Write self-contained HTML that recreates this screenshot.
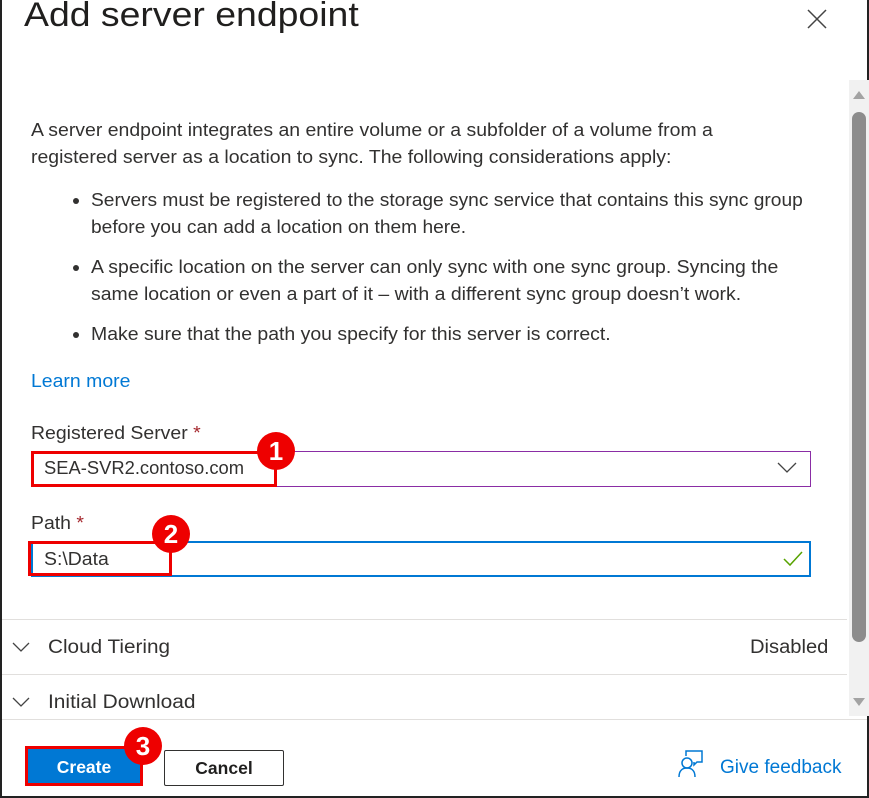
<!DOCTYPE html>
<html><head><style>
*{margin:0;padding:0;box-sizing:border-box}
body{width:869px;height:798px;overflow:hidden;background:#fff;font-family:"Liberation Sans",sans-serif;color:#323130;position:relative}
.frame{position:absolute;left:0;top:0;width:869px;height:798px;border:2px solid #222;border-top:none}
.a{position:absolute;white-space:nowrap}
.t{font-size:18px;line-height:27px;transform:scaleX(1.08);transform-origin:left}
.badge{position:absolute;width:38px;height:38px;border-radius:50%;background:#e00;color:#fff;font-size:26px;font-weight:bold;text-align:center;line-height:38px}
.red{position:absolute;border:3px solid #e00}
</style></head><body>
<div class="frame"></div>
<div class="a" style="left:24px;top:-4px;font-size:34px;color:#201f1e;transform:scaleX(1.1);transform-origin:left">Add server endpoint</div>
<svg class="a" style="left:807px;top:9px" width="20" height="20"><path d="M1 1L19 19M19 1L1 19" stroke="#444" stroke-width="1.5"/></svg>
<div class="a" style="left:849px;top:80px;width:20px;height:636px;background:#f1f1f1"></div>
<svg class="a" style="left:852px;top:90px" width="14" height="10"><path d="M7 1L13 9H1Z" fill="#a3a3a3"/></svg>
<div class="a" style="left:852px;top:112px;width:14px;height:530px;background:#8c8c8c;border-radius:7px"></div>
<svg class="a" style="left:852px;top:697px" width="14" height="10"><path d="M1 1H13L7 9Z" fill="#a3a3a3"/></svg>

<div class="a t" style="left:31px;top:117px">A server endpoint integrates an entire volume or a subfolder of a volume from a<br>registered server as a location to sync. The following considerations apply:</div>
<div class="a" style="left:73px;top:198px;width:6px;height:6px;border-radius:50%;background:#323130"></div>
<div class="a t" style="left:91px;top:187px;transform:scaleX(1.065)">Servers must be registered to the storage sync service that contains this sync group<br>before you can add a location on them here.</div>
<div class="a" style="left:73px;top:265px;width:6px;height:6px;border-radius:50%;background:#323130"></div>
<div class="a t" style="left:91px;top:254px">A specific location on the server can only sync with one sync group. Syncing the<br>same location or even a part of it – with a different sync group doesn’t work.</div>
<div class="a" style="left:73px;top:332px;width:6px;height:6px;border-radius:50%;background:#323130"></div>
<div class="a t" style="left:91px;top:321px">Make sure that the path you specify for this server is correct.</div>
<div class="a t" style="left:31px;top:368px;color:#0078d4">Learn more</div>

<div class="a t" style="left:31px;top:420px">Registered Server <span style="color:#a4262c">*</span></div>
<div class="a" style="left:31px;top:451px;width:780px;height:36px;border:1px solid #8a2da5"></div>
<div class="a t" style="left:44px;top:455px;transform:scaleX(1.02)">SEA-SVR2.contoso.com</div>
<svg class="a" style="left:777px;top:462px" width="20" height="12"><path d="M1 1L10 10L19 1" stroke="#444" stroke-width="1.3" fill="none"/></svg>
<div class="red" style="left:31px;top:451px;width:246px;height:36px"></div>
<div class="badge" style="left:257px;top:432px">1</div>

<div class="a t" style="left:31px;top:510px">Path <span style="color:#a4262c">*</span></div>
<div class="a" style="left:31px;top:541px;width:780px;height:36px;border:2px solid #0078d4"></div>
<div class="a t" style="left:44px;top:546px">S:\Data</div>
<svg class="a" style="left:783px;top:551px" width="20" height="16"><path d="M1 8L7 14L19 1" stroke="#57a300" stroke-width="1.5" fill="none"/></svg>
<div class="red" style="left:28px;top:541px;width:144px;height:35px"></div>
<div class="badge" style="left:152px;top:515px">2</div>

<div class="a" style="left:2px;top:619px;width:845px;height:1px;background:#e1dfdd"></div>
<svg class="a" style="left:12px;top:642px" width="18" height="11"><path d="M1 1L9 9L17 1" stroke="#444" stroke-width="1.3" fill="none"/></svg>
<div class="a" style="left:48px;top:634px;font-size:19px;line-height:27px;transform:scaleX(1.09);transform-origin:left">Cloud Tiering</div>
<div class="a" style="left:750px;top:634px;font-size:19px;line-height:27px;transform:scaleX(1.06);transform-origin:left">Disabled</div>
<div class="a" style="left:2px;top:674px;width:845px;height:1px;background:#e1dfdd"></div>
<svg class="a" style="left:12px;top:697px" width="18" height="11"><path d="M1 1L9 9L17 1" stroke="#444" stroke-width="1.3" fill="none"/></svg>
<div class="a" style="left:48px;top:689px;font-size:19px;line-height:27px;transform:scaleX(1.1);transform-origin:left">Initial Download</div>
<div class="a" style="left:2px;top:719px;width:865px;height:1px;background:#e1dfdd"></div>

<div class="a" style="left:25px;top:746px;width:118px;height:40px;background:#0078d4;border:3px solid #e00"></div>
<div class="a" style="left:25px;top:757px;width:118px;text-align:center;color:#fff;font-weight:bold;font-size:17.5px">Create</div>
<div class="badge" style="left:124px;top:727px">3</div>
<div class="a" style="left:164px;top:750px;width:120px;height:36px;border:1px solid #323130;border-radius:2px;text-align:center;line-height:34px;font-weight:bold;font-size:17.5px;color:#201f1e">Cancel</div>
<svg class="a" style="left:678px;top:750px" width="26" height="28"><circle cx="9" cy="13" r="5" stroke="#0078d4" stroke-width="1.5" fill="none"/><path d="M1 27C1 20 5 18 9 18C13 18 17 20 17 27" stroke="#0078d4" stroke-width="1.5" fill="none"/><path d="M8 6V1H24V12H19L16 15V12" stroke="#0078d4" stroke-width="1.5" fill="none"/></svg>
<div class="a" style="left:720px;top:757px;font-size:19px;color:#0078d4">Give feedback</div>
</body></html>
